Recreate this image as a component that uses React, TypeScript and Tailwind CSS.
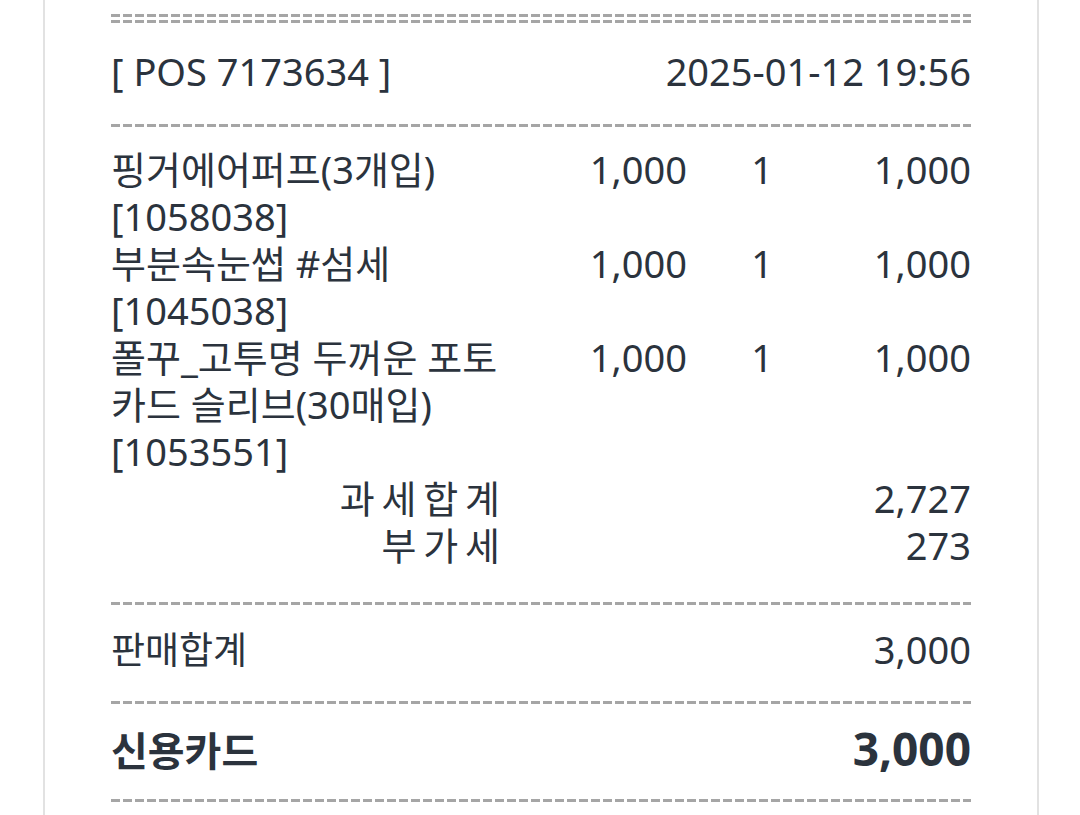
const items = [
  { name: ["핑거에어퍼프(3개입)"], code: "[1058038]", price: "1,000", qty: "1", amount: "1,000" },
  { name: ["부분속눈썹 #섬세"], code: "[1045038]", price: "1,000", qty: "1", amount: "1,000" },
  { name: ["폴꾸_고투명 두꺼운 포토", "카드 슬리브(30매입)"], code: "[1053551]", price: "1,000", qty: "1", amount: "1,000" },
];

function Dash() {
  return (
    <div className="h-[3px] w-full bg-[repeating-linear-gradient(90deg,#8f8f8f_0px,#8f8f8f_9px,transparent_9px,transparent_12px)] opacity-80" />
  );
}

export default function App() {
  return (
    <div className="min-h-screen bg-white text-[#2b333d] font-['Noto_Sans','Noto_Sans_CJK_KR',sans-serif]">
      <div className="ml-[43px] w-[996px] min-h-[815px] border-x-2 border-[#e2e2e2] px-[66px] pt-[14px]">
        {/* double rule */}
        <div className="flex flex-col gap-[3px]">
          <Dash />
          <Dash />
        </div>

        <div className="flex justify-between pt-[25px] pb-[29px] text-[38px] leading-[47px]">
          <span>[ POS 7173634 ]</span>
          <span>2025-01-12 19:56</span>
        </div>
        <Dash />

        <div className="pt-[19px] pb-[33px] text-[38px] leading-[47px]">
          {items.map((it) => (
            <div key={it.code} className="grid grid-cols-[389px_187px_150px_1fr]">
              <div className="whitespace-nowrap">
                {it.name.map((line) => (
                  <div key={line}>{line}</div>
                ))}
                <div>{it.code}</div>
              </div>
              <div className="text-right">{it.price}</div>
              <div className="text-center">{it.qty}</div>
              <div className="text-right">{it.amount}</div>
            </div>
          ))}
          <div className="grid grid-cols-[389px_1fr]">
            <div className="text-right tracking-[0.18em] -mr-[0.18em]">과세합계</div>
            <div className="text-right">2,727</div>
          </div>
          <div className="grid grid-cols-[389px_1fr]">
            <div className="text-right tracking-[0.18em] -mr-[0.18em]">부가세</div>
            <div className="text-right">273</div>
          </div>
        </div>
        <Dash />

        <div className="flex items-baseline justify-between pt-[21px] pb-[28px] text-[38px] leading-[47px]">
          <span className="text-[37px]">판매합계</span>
          <span>3,000</span>
        </div>
        <Dash />

        <div className="flex items-baseline justify-between pt-[16px] pb-[20px] leading-[56px] font-bold">
          <span className="text-[40px]">신용카드</span>
          <span className="text-[46px]">3,000</span>
        </div>
        <Dash />
      </div>
    </div>
  );
}
